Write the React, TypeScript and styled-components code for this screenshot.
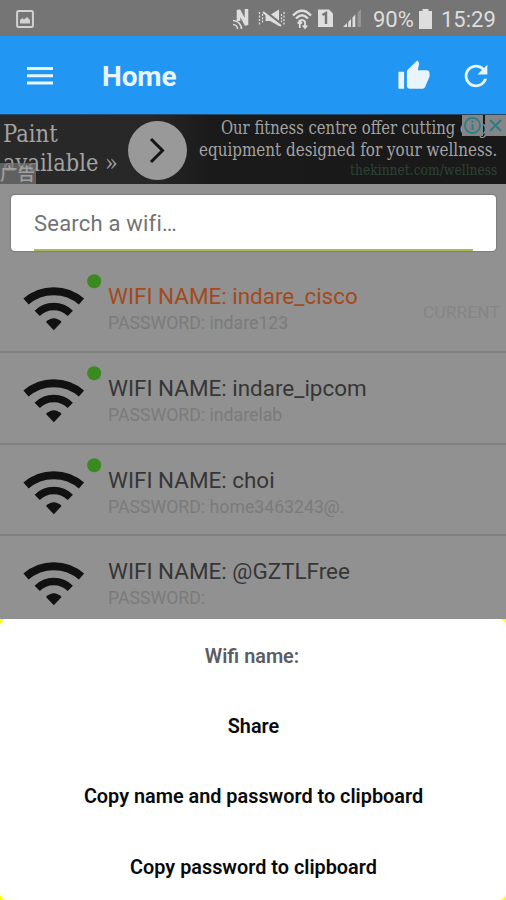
import React from "react";
import styled, { createGlobalStyle } from "styled-components";

const GlobalStyle = createGlobalStyle`
  *, *::before, *::after { box-sizing: border-box; }
  body { margin: 0; background: #919191; font-family: Roboto, sans-serif; }
  svg { display: block; flex: none; }
`;

const Screen = styled.div`
  width: 506px;
  height: 900px;
  overflow: hidden;
  display: flex;
  flex-direction: column;
  background: #919191;
`;

const StatusBar = styled.div`
  height: 36px;
  flex: none;
  display: flex;
  align-items: center;
  padding: 1px 10px 0 16px;
  background: #757575;
  color: #dedede;
`;

const StatusIcons = styled.div`
  margin-left: auto;
  display: flex;
  align-items: center;
`;

const StatusText = styled.span<{ $width: number; $left: number }>`
  width: ${(p) => p.$width}px;
  margin-left: ${(p) => p.$left}px;
  padding-top: 2px;
  font-size: 22px;
  line-height: 32px;
  white-space: nowrap;
`;

const AppBar = styled.header`
  height: 78px;
  flex: none;
  display: flex;
  align-items: center;
  padding: 1px 13px 0 27px;
  background: #2196f3;
  color: #e9f4fd;
`;

const Title = styled.h1`
  margin: 3px auto 0 49px;
  font-size: 28px;
  font-weight: 700;
  line-height: 34px;
  letter-spacing: -0.1px;
`;

const Actions = styled.div`
  display: flex;
  align-items: center;
  gap: 28px;
`;

const AdBanner = styled.section`
  position: relative;
  height: 70px;
  flex: none;
  display: flex;
  border-top: 1px solid #26496a;
  background: linear-gradient(90deg, #292929 0, #272727 150px, #1a1a1a 210px, #191919 100%);
  color: #a3a3a3;
  font-family: "DejaVu Serif", serif;
`;

const AdHeadline = styled.div`
  width: 128px;
  padding: 5px 0 0 3px;
  font-size: 24px;
  line-height: 29px;
  white-space: nowrap;
`;

const Squeeze = styled.div<{ $x: number; $origin?: string }>`
  transform: scaleX(${(p) => p.$x});
  transform-origin: ${(p) => p.$origin ?? "left"} center;
  white-space: nowrap;
`;

const AdArrow = styled.div`
  width: 59px;
  height: 59px;
  margin-top: 6px;
  border-radius: 50%;
  background: #999;
`;

const AdCopy = styled.div`
  flex: 1;
  min-width: 0;
  padding: 2px 9px 0 0;
  display: flex;
  flex-direction: column;
  align-items: flex-end;
  font-size: 18px;
  line-height: 22px;
`;

const AdLink = styled(Squeeze)`
  font-size: 14px;
  line-height: 18px;
  color: #2f4334;
`;

const AdLabel = styled.span`
  position: absolute;
  left: 0;
  bottom: 0;
  width: 36px;
  height: 21px;
  background: rgba(115, 115, 115, 0.75);
  color: #a0a0a0;
  font: 500 17.5px/20px "Noto Sans CJK SC", sans-serif;
`;

const AdChoices = styled.div`
  position: absolute;
  top: 0;
  right: 0;
  display: flex;
  gap: 2px;
`;

const AdButton = styled.span`
  width: 21px;
  height: 21px;
  display: grid;
  place-items: center;
  background: #858585;
`;

const SearchBox = styled.label`
  height: 56px;
  flex: none;
  margin: 11px 10px 10px 11px;
  padding: 0 23px;
  display: flex;
  background: #fff;
  border-radius: 4px;
  box-shadow: 0 0 2px rgba(0, 0, 0, 0.45);
`;

const SearchInput = styled.input`
  flex: 1;
  min-width: 0;
  height: 56px;
  padding: 3px 0 0;
  border: 0;
  border-bottom: 2px solid #aaba58;
  outline: 0;
  background: transparent;
  font: 22px Roboto, sans-serif;
  letter-spacing: 0.2px;
  &::placeholder { color: #737373; opacity: 1; }
`;

const List = styled.div`
  flex: 1;
  min-height: 0;
  overflow: hidden;
`;

const Row = styled.div`
  height: 91.5px;
  display: flex;
  border-bottom: 2px solid #808080;
  &:first-child { height: 92px; }
`;

const Signal = styled.div`
  width: 108px;
  flex: none;
`;

const Details = styled.div`
  flex: 1;
  padding-top: 21px;
  white-space: nowrap;
`;

const Name = styled.div<{ $active?: boolean }>`
  font-size: 22.45px;
  line-height: 28px;
  color: ${(p) => (p.$active ? "#a34a1d" : "#363636")};
`;

const Password = styled.div`
  font-size: 17.7px;
  line-height: 27px;
  color: #7b7b7b;
`;

const Current = styled.span`
  margin-right: 6px;
  padding-top: 41px;
  font-size: 17.2px;
  line-height: 20px;
  letter-spacing: 0.2px;
  color: #858585;
`;

const SheetBacking = styled.div`
  height: 281px;
  flex: none;
  background: #ffff00;
`;

const Sheet = styled.div`
  height: 281px;
  padding-top: 1px;
  border-radius: 7px;
  background: #fff;
  display: flex;
  flex-direction: column;
`;

const SheetItem = styled.div<{ $muted?: boolean }>`
  height: 70.2px;
  flex: none;
  padding: 3px ${(p) => (p.$muted ? 3 : 0)}px 0 1px;
  display: flex;
  align-items: center;
  justify-content: center;
  font-size: 19.85px;
  font-weight: 600;
  color: ${(p) => (p.$muted ? "#5c5c62" : "#0a0a0a")};
`;

const WifiGlyph = ({ online }: { online: boolean }) => (
  <svg width="108" height="90" viewBox="0 0 108 90" fill="none">
    <path d="M26 40.5A42.5 42.5 0 0 1 81.5 40.5" stroke="#111" strokeWidth="8" />
    <path d="M37.2 52.3A23.5 23.5 0 0 1 70.3 52.3" stroke="#111" strokeWidth="7.5" />
    <path d="M46 61Q53.8 53.5 61.6 61L53.8 69.3Z" fill="#111" />
    {online && <circle cx="94.2" cy="20.3" r="7" fill="#3a8a21" />}
  </svg>
);

const StatusGlyphs = () => (
  <svg width="134" height="24" viewBox="0 0 134 24" fill="none">
    <g stroke="#dedede">
      <path d="M6.5 14V3L14.5 18V2" strokeWidth="3.6" />
      <path d="M1 13.5A8.5 8.5 0 0 1 9.5 22M1 17.5A4.5 4.5 0 0 1 5.5 22" strokeWidth="1.6" />
      <path d="M27.5 5V19M52 5V19" strokeWidth="1.3" strokeDasharray="2 1.5" />
      <path d="M30.5 7V17M49.5 7V17" strokeWidth="1.2" strokeDasharray="2 1.3" />
      <path d="M61 8.5Q70 -1 79 8.5M64 11.5Q70 5 76 11.5" strokeWidth="2.4" />
      <path d="M67 14.5Q70 11.5 73 14.5" strokeWidth="2" />
    </g>
    <path d="M33.5 8H38L47 2.5V19L38 14H33.5Z" fill="#dedede" />
    <path d="M31 3L50 18" stroke="#757575" strokeWidth="3" />
    <path d="M31 5L49 19" stroke="#dedede" strokeWidth="2.2" />
    <path d="M67.8 21V14M65.7 16.5L67.8 14L70 16.5M73 14V21M70.8 18.5L73 21L75.2 18.5" stroke="#dedede" strokeWidth="1.8" />
    <path d="M86 2.5H97L101 6.5V20H86Z" fill="#dedede" />
    <path d="M90.5 8L94 6V17" stroke="#757575" strokeWidth="2.4" />
    <path d="M111 20L115 16V20ZM116.2 15L119 12V20H116.2ZM120.5 10.5L123.3 7.5V20H120.5Z" fill="#dedede" />
    <path d="M125.5 5.5L129 2V20H125.5Z" fill="#969696" />
  </svg>
);

const networks = [
  { name: "indare_cisco", password: "indare123", online: true, current: true },
  { name: "indare_ipcom", password: "indarelab", online: true },
  { name: "choi", password: "home3463243@.", online: true },
  { name: "@GZTLFree", password: "", online: false },
];

export default function App() {
  return (
    <>
      <GlobalStyle />
      <Screen>
        <StatusBar>
          <svg width="18" height="18" viewBox="0 0 18 18" fill="none">
            <rect x="1.1" y="1.1" width="15.8" height="15.8" rx="1.5" stroke="#d2d2d2" strokeWidth="2" />
            <path d="M4 13.5V10L6.5 8L8 9.5L11 7L14 10V13.5Z" fill="#d2d2d2" />
          </svg>
          <StatusIcons>
            <StatusGlyphs />
            <StatusText $width={46} $left={7}>90%</StatusText>
            <svg width="13" height="20" viewBox="0 0 13 20">
              <path d="M3.5 0H9.5V2H13V20H0V2H3.5Z" fill="#dedede" />
            </svg>
            <StatusText $width={55} $left={9}>15:29</StatusText>
          </StatusIcons>
        </StatusBar>
        <AppBar>
          <svg width="26" height="20" viewBox="0 0 26 20">
            <path d="M0 1H26V4H0ZM0 8.3H26V11.3H0ZM0 15.6H26V18.6H0Z" fill="#e9f4fd" />
          </svg>
          <Title>Home</Title>
          <Actions>
            <svg width="34" height="34" viewBox="0 0 24 24" fill="#e9f4fd">
              <path d="M1 21h4V9H1v12zm22-11c0-1.1-.9-2-2-2h-6.31l.95-4.57.03-.32c0-.41-.17-.79-.44-1.06L14.17 1 7.59 7.59C7.22 7.95 7 8.45 7 9v10c0 1.1.9 2 2 2h9c.83 0 1.54-.5 1.84-1.22l3.02-7.05c.09-.23.14-.47.14-.73v-2z" />
            </svg>
            <svg width="34" height="34" viewBox="0 0 24 24" fill="#e9f4fd">
              <path d="M17.65 6.35A7.958 7.958 0 0 0 12 4c-4.42 0-7.99 3.58-7.99 8s3.57 8 7.99 8c3.73 0 6.84-2.55 7.73-6h-2.08A5.99 5.99 0 0 1 12 18c-3.31 0-6-2.69-6-6s2.69-6 6-6c1.66 0 3.14.69 4.22 1.78L13 11h7V4l-2.35 2.35z" />
            </svg>
          </Actions>
        </AppBar>
        <AdBanner>
          <AdHeadline>
            <Squeeze $x={0.88}>Paint</Squeeze>
            <Squeeze $x={0.875}>available »</Squeeze>
          </AdHeadline>
          <AdArrow>
            <svg width="59" height="59" viewBox="0 0 59 59" fill="none">
              <path d="M23 18L34.5 29.5L23 41" stroke="#141414" strokeWidth="3" />
            </svg>
          </AdArrow>
          <AdCopy>
            <Squeeze $x={0.824} $origin="right">Our fitness centre offer cutting edge</Squeeze>
            <Squeeze $x={0.842} $origin="right">equipment designed for your wellness.</Squeeze>
            <AdLink $x={0.88} $origin="right">thekinnet.com/wellness</AdLink>
          </AdCopy>
          <AdLabel>广告</AdLabel>
          <AdChoices>
            <AdButton>
              <svg width="19" height="19" viewBox="0 0 19 19" fill="none" stroke="#24818b">
                <circle cx="9.5" cy="9.5" r="7.6" strokeWidth="1.7" />
                <path d="M9.5 8V14M9.5 4.5V6.5" strokeWidth="2" />
              </svg>
            </AdButton>
            <AdButton>
              <svg width="15" height="15" viewBox="0 0 15 15" fill="none" stroke="#24818b">
                <path d="M2 2L13 13M13 2L2 13" strokeWidth="2" />
              </svg>
            </AdButton>
          </AdChoices>
        </AdBanner>
        <SearchBox>
          <SearchInput placeholder="Search a wifi…" />
        </SearchBox>
        <List>
          {networks.map((n) => (
            <Row key={n.name}>
              <Signal>
                <WifiGlyph online={n.online} />
              </Signal>
              <Details>
                <Name $active={n.current}>WIFI NAME: {n.name}</Name>
                <Password>PASSWORD: {n.password}</Password>
              </Details>
              {n.current && <Current>CURRENT</Current>}
            </Row>
          ))}
        </List>
        <SheetBacking>
          <Sheet>
            <SheetItem $muted>Wifi name:</SheetItem>
            <SheetItem>Share</SheetItem>
            <SheetItem>Copy name and password to clipboard</SheetItem>
            <SheetItem>Copy password to clipboard</SheetItem>
          </Sheet>
        </SheetBacking>
      </Screen>
    </>
  );
}
